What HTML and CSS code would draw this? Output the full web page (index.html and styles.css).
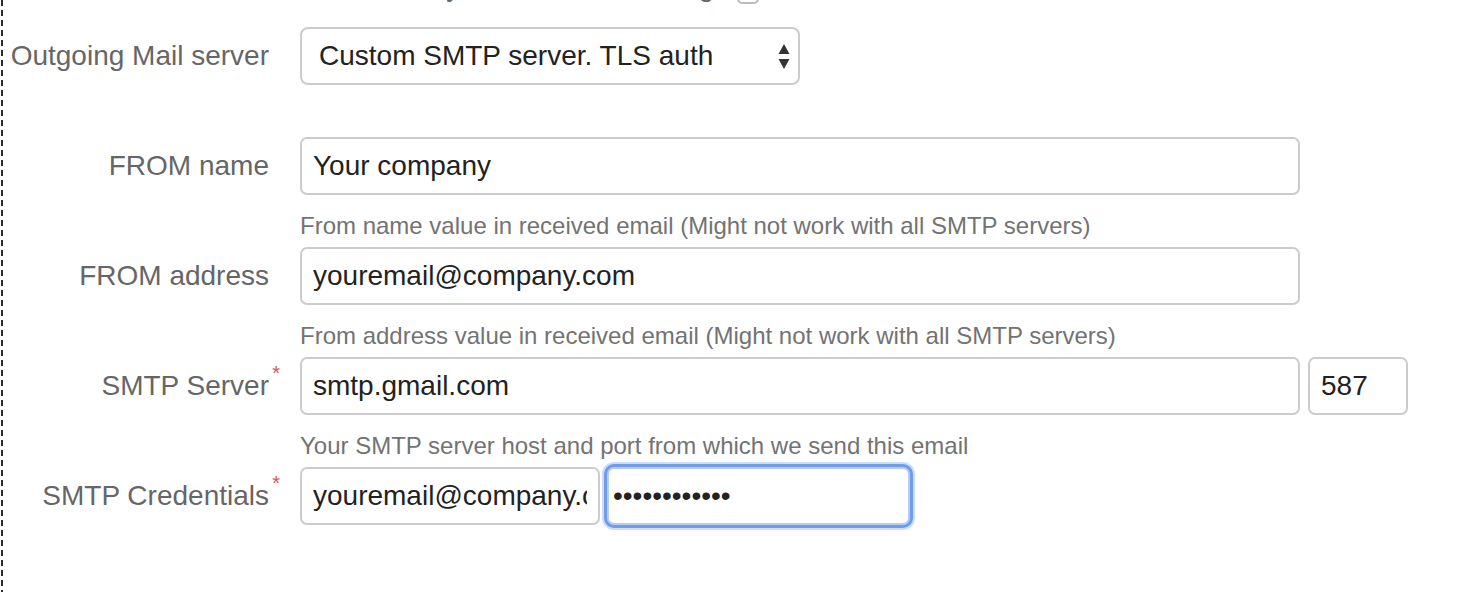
FILE: index.html
```html
<!DOCTYPE html>
<html lang="en">
<head>
<meta charset="utf-8">
<title>Mail settings</title>
<link rel="stylesheet" href="styles.css">
</head>
<body>
<div class="page">
  <div class="top-row">
    <span class="top-text">Ask every time before sending</span>
    <span class="checkbox"></span>
  </div>

  <div class="field no-help">
    <label class="label">Outgoing Mail server</label>
    <div class="control">
      <div class="select">
        <span class="select-text">Custom SMTP server. TLS auth</span>
        <svg class="select-arrows" width="12" height="26" viewBox="0 0 12 26" aria-hidden="true">
          <path d="M6 0 L11.5 10 L0.5 10 Z" fill="#333"/>
          <path d="M0.5 15 L11.5 15 L6 25 Z" fill="#333"/>
        </svg>
      </div>
    </div>
  </div>

  <div class="field">
    <label class="label">FROM name</label>
    <div class="control">
      <input class="input input-wide" type="text" value="Your company">
    </div>
    <div class="help">From name value in received email (Might not work with all SMTP servers)</div>
  </div>

  <div class="field">
    <label class="label">FROM address</label>
    <div class="control">
      <input class="input input-wide" type="text" value="youremail@company.com">
    </div>
    <div class="help">From address value in received email (Might not work with all SMTP servers)</div>
  </div>

  <div class="field">
    <label class="label"><span class="required">SMTP Server</span></label>
    <div class="control">
      <input class="input input-wide" type="text" value="smtp.gmail.com">
      <input class="input input-port" type="text" value="587">
    </div>
    <div class="help">Your SMTP server host and port from which we send this email</div>
  </div>

  <div class="field">
    <label class="label"><span class="required">SMTP Credentials</span></label>
    <div class="control">
      <input class="input input-user" type="text" value="youremail@company.com">
      <input class="input input-pass focused" type="password" value="secretpasswd">
    </div>
  </div>
</div>
</body>
</html>
```

FILE: styles.css
```css
* {
  box-sizing: border-box;
}

html, body {
  margin: 0;
  padding: 0;
  background: #ffffff;
}

body {
  font-family: "Liberation Sans", Arial, Helvetica, sans-serif;
  color: #333333;
}

.page {
  height: 592px;
  overflow: hidden;
  background-image: repeating-linear-gradient(to bottom, #2b2b2b 0, #2b2b2b 6px, transparent 6px, transparent 10px);
  background-size: 2px 100%;
  background-position: 1px 0;
  background-repeat: no-repeat;
}

.top-row {
  display: flex;
  align-items: flex-end;
  gap: 23px;
  height: 32px;
  margin-top: -29px;
  margin-bottom: 24px;
  font-size: 28px;
  line-height: 32px;
  color: #666666;
}

.top-text {
  width: 714px;
  text-align: right;
}

.checkbox {
  width: 22px;
  height: 22px;
  border: 2px solid #bbbbbb;
  border-radius: 5px;
  margin-bottom: -1px;
}

.field {
  display: grid;
  grid-template-columns: 300px 1fr;
}

.field.no-help {
  margin-bottom: 52px;
}

.label {
  grid-column: 1;
  grid-row: 1;
  align-self: center;
  text-align: right;
  padding-right: 31px;
  font-size: 28px;
  line-height: 32px;
  color: #666666;
}

.required {
  position: relative;
}

.required::after {
  content: "*";
  position: absolute;
  right: -11px;
  top: -7px;
  font-size: 20px;
  line-height: 20px;
  color: #d9534f;
}

.control {
  grid-column: 2;
  grid-row: 1;
  display: flex;
  align-items: center;
}

.help {
  grid-column: 2;
  grid-row: 2;
  margin: 14px 0 4px;
  font-size: 24px;
  line-height: 34px;
  color: #737373;
}

.select {
  position: relative;
  width: 500px;
  height: 58px;
  border: 2px solid #cccccc;
  border-radius: 8px;
  background: #ffffff;
  display: flex;
  align-items: center;
  padding-left: 17px;
  font-size: 28px;
  color: #222222;
}

.select-arrows {
  position: absolute;
  right: 8px;
  top: 15px;
}

.input {
  height: 58px;
  border: 2px solid #cccccc;
  border-radius: 7px;
  background: #ffffff;
  padding: 0 11px;
  font-family: "Liberation Sans", Arial, Helvetica, sans-serif;
  font-size: 28px;
  color: #222222;
  outline: none;
  margin: 0;
}

.input-wide {
  width: 1000px;
}

.input-port {
  width: 100px;
  margin-left: 8px;
}

.input-user {
  width: 300px;
}

.input-pass {
  width: 303px;
  margin-left: 7px;
  padding-left: 4px;
}

.input.focused {
  border-color: #b7cdf3;
  box-shadow: 0 0 0 3px #6e9ded, 0 0 0 5px rgba(110, 157, 237, 0.35);
}
```
